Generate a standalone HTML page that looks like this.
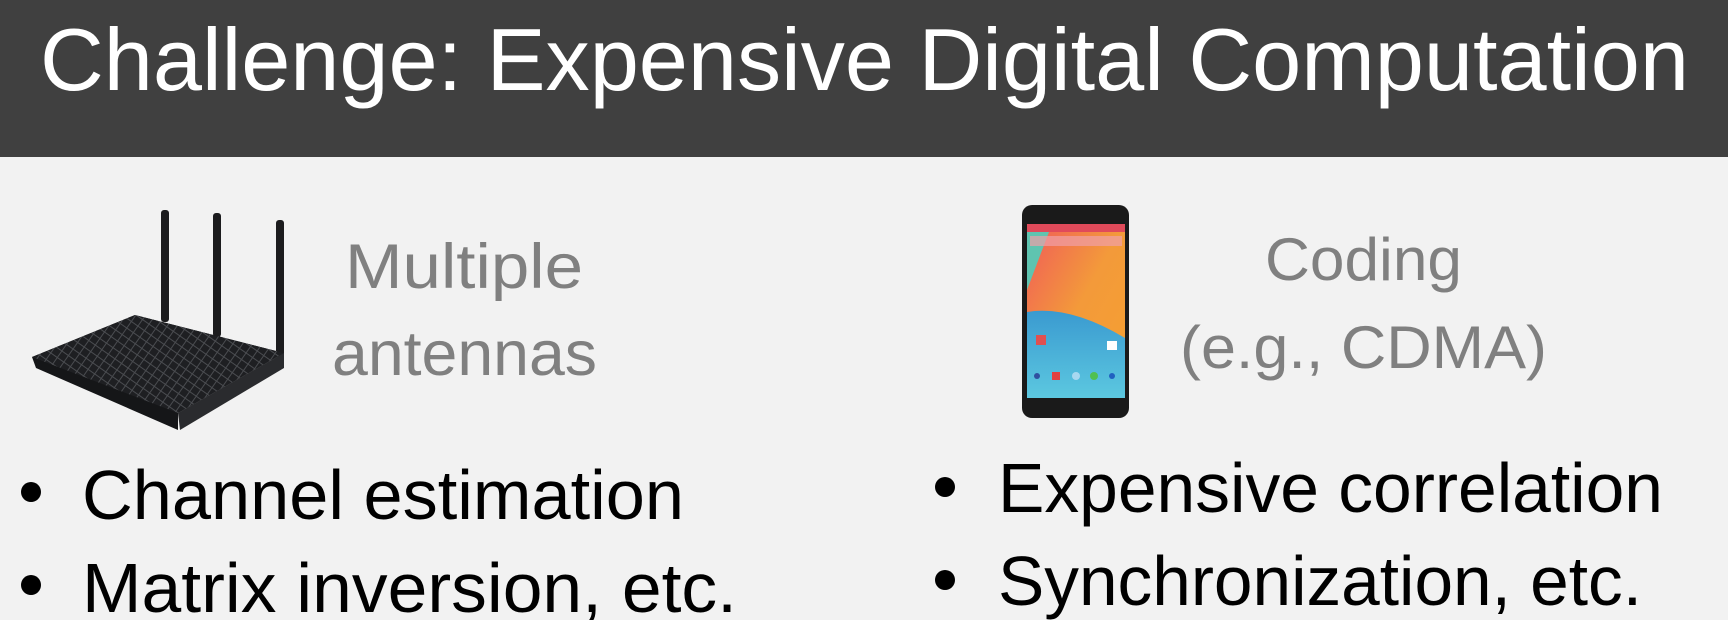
<!DOCTYPE html>
<html><head><meta charset="utf-8"><style>
html,body{margin:0;padding:0;background:#f2f2f2;}
svg{display:block}
text{font-family:"Liberation Sans",sans-serif;}
</style></head><body>
<svg width="1728" height="620" viewBox="0 0 1728 620" xmlns="http://www.w3.org/2000/svg">
<defs>
<linearGradient id="scr" x1="0" y1="0" x2="1" y2="1">
<stop offset="0" stop-color="#f05a5a"/><stop offset="0.5" stop-color="#f39a3a"/><stop offset="1" stop-color="#f5a030"/>
</linearGradient>
<linearGradient id="blu" x1="0" y1="0" x2="0" y2="1">
<stop offset="0" stop-color="#3a9ad0"/><stop offset="1" stop-color="#5cc8e0"/>
</linearGradient>
<pattern id="mesh" width="8" height="8" patternUnits="userSpaceOnUse" patternTransform="rotate(35)">
<rect width="8" height="8" fill="#1e1f22"/><path d="M0 4H8M4 0V8" stroke="#4a4c50" stroke-width="1"/>
</pattern>
</defs>
<rect width="1728" height="620" fill="#f2f2f2"/>
<rect width="1728" height="157" fill="#404040"/>
<text x="40" y="90" font-size="88" fill="#ffffff" textLength="1649" lengthAdjust="spacingAndGlyphs">Challenge: Expensive Digital Computation</text>

<!-- router -->
<g>
<rect x="161" y="210" width="8" height="112" rx="3" fill="#1c1c1e"/>
<rect x="213" y="213" width="8" height="124" rx="3" fill="#1c1c1e"/>
<rect x="276" y="220" width="8" height="137" rx="3" fill="#1c1c1e"/>
<polygon points="32,357 135,315 284,353 178,413 178,430 36,368" fill="#151618"/>
<polygon points="32,357 135,315 284,353 178,413" fill="url(#mesh)"/>
<polygon points="178,413 284,353 284,368 180,430" fill="#2a2b2e"/>
</g>

<text x="345" y="288" font-size="63" fill="#808080" textLength="238" lengthAdjust="spacingAndGlyphs">Multiple</text>
<text x="332" y="375" font-size="63" fill="#808080" textLength="265" lengthAdjust="spacingAndGlyphs">antennas</text>

<!-- phone -->
<g>
<rect x="1022" y="205" width="107" height="213" rx="10" fill="#1a1a1a"/>
<rect x="1027" y="224" width="98" height="174" fill="url(#scr)"/>
<polygon points="1027,224 1052,224 1027,290" fill="#5fc4b0"/>
<rect x="1027" y="224" width="98" height="8" fill="#e04a5a"/>
<rect x="1030" y="236" width="92" height="10" fill="#f0a0a8" opacity="0.7"/>
<path d="M1027 312 Q1070 305 1125 338 L1125 398 L1027 398 Z" fill="url(#blu)"/>
<rect x="1036" y="335" width="10" height="10" fill="#e05050"/>
<rect x="1107" y="341" width="10" height="9" fill="#ffffff"/>
<circle cx="1037" cy="376" r="3" fill="#3050a0"/>
<rect x="1052" y="372" width="8" height="8" fill="#e04040"/>
<circle cx="1076" cy="376" r="4" fill="#a8d8f0"/>
<circle cx="1094" cy="376" r="4" fill="#50c050"/>
<circle cx="1112" cy="376" r="3" fill="#2060c0"/>
</g>

<text x="1265" y="280" font-size="60" fill="#808080" textLength="197" lengthAdjust="spacingAndGlyphs">Coding</text>
<text x="1180" y="368" font-size="60" fill="#808080" textLength="367" lengthAdjust="spacingAndGlyphs">(e.g., CDMA)</text>

<circle cx="31" cy="492" r="10" fill="#000"/>
<circle cx="31" cy="585" r="10" fill="#000"/>
<text x="82" y="519" font-size="70" fill="#000" textLength="602" lengthAdjust="spacingAndGlyphs">Channel estimation</text>
<text x="82" y="612" font-size="70" fill="#000" textLength="655" lengthAdjust="spacingAndGlyphs">Matrix inversion, etc.</text>

<circle cx="945" cy="487" r="10" fill="#000"/>
<circle cx="945" cy="580" r="10" fill="#000"/>
<text x="998" y="512" font-size="70" fill="#000" textLength="665" lengthAdjust="spacingAndGlyphs">Expensive correlation</text>
<text x="998" y="605" font-size="70" fill="#000" textLength="644" lengthAdjust="spacingAndGlyphs">Synchronization, etc.</text>
</svg>
</body></html>
